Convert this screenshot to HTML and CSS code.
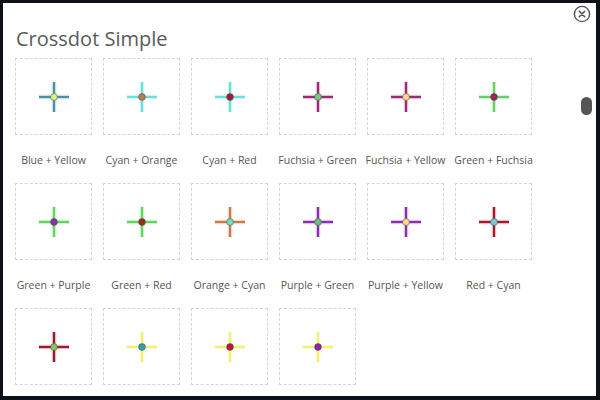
FILE: index.html
```html
<!DOCTYPE html>
<html>
<head>
<meta charset="utf-8">
<link rel="stylesheet" href="styles.css">
</head>
<body>
<div class="modal">
  <button class="close" aria-label="Close">
    <svg width="18" height="18" viewBox="0 0 18 18"><circle cx="9" cy="9" r="7.6" fill="none" stroke="#555" stroke-width="1.4"/><path d="M6.3 6.3L11.7 11.7M11.7 6.3L6.3 11.7" stroke="#555" stroke-width="1.6" stroke-linecap="round"/></svg>
  </button>
  <div class="thumb"></div>
  <h1 class="title">Crossdot Simple</h1>
  <div class="grid">
    <div class="item" style="--line:#4a90a8;--dot:#d8f57a"><div class="tile"><svg class="cross" viewBox="0 0 40 40"><path class="glow" d="M5 20H35M20 5V35"/><path class="arm" d="M5 20H35M20 5V35"/><circle class="dot" cx="20" cy="20" r="3.4"/></svg></div><div class="label">Blue + Yellow</div></div>
    <div class="item" style="--line:#66e0d8;--dot:#c07a50"><div class="tile"><svg class="cross" viewBox="0 0 40 40"><path class="glow" d="M5 20H35M20 5V35"/><path class="arm" d="M5 20H35M20 5V35"/><circle class="dot" cx="20" cy="20" r="3.4"/></svg></div><div class="label">Cyan + Orange</div></div>
    <div class="item" style="--line:#66e0d8;--dot:#a0203a"><div class="tile"><svg class="cross" viewBox="0 0 40 40"><path class="glow" d="M5 20H35M20 5V35"/><path class="arm" d="M5 20H35M20 5V35"/><circle class="dot" cx="20" cy="20" r="3.4"/></svg></div><div class="label">Cyan + Red</div></div>
    <div class="item" style="--line:#9c2a7a;--dot:#7cc87c"><div class="tile"><svg class="cross" viewBox="0 0 40 40"><path class="glow" d="M5 20H35M20 5V35"/><path class="arm" d="M5 20H35M20 5V35"/><circle class="dot" cx="20" cy="20" r="3.4"/></svg></div><div class="label">Fuchsia + Green</div></div>
    <div class="item" style="--line:#9c2a7a;--dot:#ffd88a"><div class="tile"><svg class="cross" viewBox="0 0 40 40"><path class="glow" d="M5 20H35M20 5V35"/><path class="arm" d="M5 20H35M20 5V35"/><circle class="dot" cx="20" cy="20" r="3.4"/></svg></div><div class="label">Fuchsia + Yellow</div></div>
    <div class="item" style="--line:#66d066;--dot:#a0205a"><div class="tile"><svg class="cross" viewBox="0 0 40 40"><path class="glow" d="M5 20H35M20 5V35"/><path class="arm" d="M5 20H35M20 5V35"/><circle class="dot" cx="20" cy="20" r="3.4"/></svg></div><div class="label">Green + Fuchsia</div></div>
    <div class="item" style="--line:#5cd65c;--dot:#8a2fa8"><div class="tile"><svg class="cross" viewBox="0 0 40 40"><path class="glow" d="M5 20H35M20 5V35"/><path class="arm" d="M5 20H35M20 5V35"/><circle class="dot" cx="20" cy="20" r="3.4"/></svg></div><div class="label">Green + Purple</div></div>
    <div class="item" style="--line:#5cd65c;--dot:#a02818"><div class="tile"><svg class="cross" viewBox="0 0 40 40"><path class="glow" d="M5 20H35M20 5V35"/><path class="arm" d="M5 20H35M20 5V35"/><circle class="dot" cx="20" cy="20" r="3.4"/></svg></div><div class="label">Green + Red</div></div>
    <div class="item" style="--line:#d07848;--dot:#70e0c0"><div class="tile"><svg class="cross" viewBox="0 0 40 40"><path class="glow" d="M5 20H35M20 5V35"/><path class="arm" d="M5 20H35M20 5V35"/><circle class="dot" cx="20" cy="20" r="3.4"/></svg></div><div class="label">Orange + Cyan</div></div>
    <div class="item" style="--line:#8a2fb0;--dot:#6cc080"><div class="tile"><svg class="cross" viewBox="0 0 40 40"><path class="glow" d="M5 20H35M20 5V35"/><path class="arm" d="M5 20H35M20 5V35"/><circle class="dot" cx="20" cy="20" r="3.4"/></svg></div><div class="label">Purple + Green</div></div>
    <div class="item" style="--line:#8a2fb0;--dot:#ffd890"><div class="tile"><svg class="cross" viewBox="0 0 40 40"><path class="glow" d="M5 20H35M20 5V35"/><path class="arm" d="M5 20H35M20 5V35"/><circle class="dot" cx="20" cy="20" r="3.4"/></svg></div><div class="label">Purple + Yellow</div></div>
    <div class="item" style="--line:#a8182c;--dot:#70d0d0"><div class="tile"><svg class="cross" viewBox="0 0 40 40"><path class="glow" d="M5 20H35M20 5V35"/><path class="arm" d="M5 20H35M20 5V35"/><circle class="dot" cx="20" cy="20" r="3.4"/></svg></div><div class="label">Red + Cyan</div></div>
    <div class="item" style="--line:#a01830;--dot:#8cc850"><div class="tile"><svg class="cross" viewBox="0 0 40 40"><path class="glow" d="M5 20H35M20 5V35"/><path class="arm" d="M5 20H35M20 5V35"/><circle class="dot" cx="20" cy="20" r="3.4"/></svg></div><div class="label">Red + Green</div></div>
    <div class="item" style="--line:#f4f070;--dot:#30a0b0"><div class="tile"><svg class="cross" viewBox="0 0 40 40"><path class="glow" d="M5 20H35M20 5V35"/><path class="arm" d="M5 20H35M20 5V35"/><circle class="dot" cx="20" cy="20" r="3.4"/></svg></div><div class="label">Yellow + Cyan</div></div>
    <div class="item" style="--line:#f4f070;--dot:#c01838"><div class="tile"><svg class="cross" viewBox="0 0 40 40"><path class="glow" d="M5 20H35M20 5V35"/><path class="arm" d="M5 20H35M20 5V35"/><circle class="dot" cx="20" cy="20" r="3.4"/></svg></div><div class="label">Yellow + Red</div></div>
    <div class="item" style="--line:#f4f070;--dot:#9020b0"><div class="tile"><svg class="cross" viewBox="0 0 40 40"><path class="glow" d="M5 20H35M20 5V35"/><path class="arm" d="M5 20H35M20 5V35"/><circle class="dot" cx="20" cy="20" r="3.4"/></svg></div><div class="label">Yellow + Purple</div></div>
  </div>
</div>
</body>
</html>
```

FILE: styles.css
```css
html, body {
  margin: 0;
  padding: 0;
  width: 600px;
  height: 400px;
  overflow: hidden;
  background: #0d1218;
}
.modal {
  position: relative;
  margin: 3px 0 0 3px;
  width: 593px;
  height: 393px;
  background: #fff;
  box-sizing: border-box;
  padding: 22px 0 0 12px;
  overflow: hidden;
  font-family: "Open Sans", "Noto Sans", sans-serif;
  color: #555;
}
.close {
  position: absolute;
  top: 2px;
  right: 5px;
  width: 18px;
  height: 18px;
  padding: 0;
  border: 0;
  background: none;
  display: flex;
}
.thumb {
  position: absolute;
  left: 578px;
  top: 94px;
  width: 11px;
  height: 18px;
  border-radius: 6px;
  background: #555;
}
.title {
  margin: 0 0 5px 1px;
  font-size: 20px;
  line-height: 28px;
  font-weight: 400;
  color: #5a5a5a;
}
.grid {
  display: grid;
  grid-template-columns: repeat(6, 77px);
  column-gap: 11px;
}
.item {
  display: flex;
  flex-direction: column;
  align-items: center;
}
.tile {
  width: 77px;
  height: 77px;
  box-sizing: border-box;
  border: 1px dashed #d4d4d4;
  display: flex;
  align-items: center;
  justify-content: center;
}
.cross {
  width: 40px;
  height: 40px;
}
.glow {
  stroke: var(--line);
  stroke-width: 6;
  opacity: 0.06;
  fill: none;
}
.arm {
  stroke: var(--line);
  stroke-width: 2.5;
  fill: none;
}
.dot {
  fill: var(--dot);
  stroke: #444;
  stroke-width: 0.5;
}
.label {
  width: 77px;
  height: 48px;
  box-sizing: border-box;
  padding-top: 18px;
  display: flex;
  justify-content: center;
  font-size: 10.5px;
  line-height: 14px;
  white-space: nowrap;
  color: #555;
}
```
